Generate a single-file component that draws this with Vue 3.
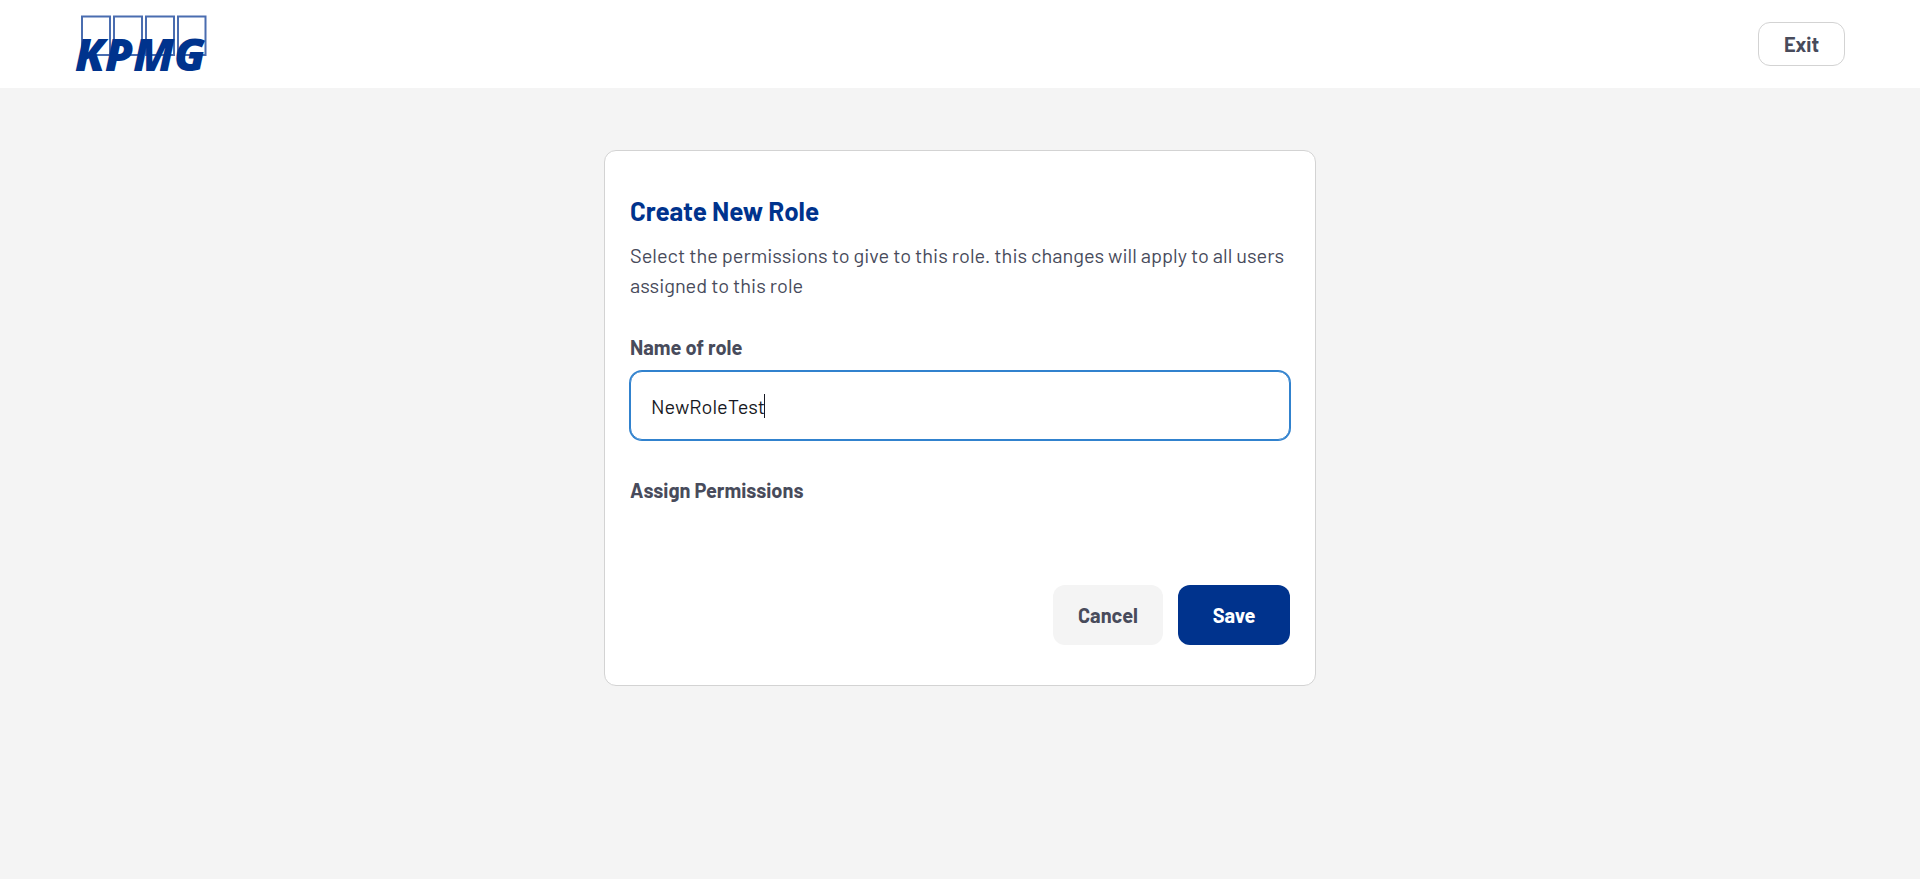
<script setup>
import { ref, onMounted } from 'vue'

const roleName = ref('NewRoleTest')
const nameInput = ref(null)

onMounted(() => {
  nameInput.value.focus()
  nameInput.value.setSelectionRange(roleName.value.length, roleName.value.length)
})
</script>

<template>
  <div class="page">
    <header class="topbar">
      <svg class="logo" width="134" height="60" viewBox="0 0 134 60" role="img" aria-label="KPMG">
        <g class="logo-boxes">
          <path d="M7 2.500H35V41H7ZM39 2.500H67V41H39ZM71 2.500H99V41H71ZM103 2.500H130.500V41H103Z" />
        </g>
        <text class="logo-text" x="0" y="57">KPMG</text>
      </svg>
      <button class="btn btn-exit" type="button">Exit</button>
    </header>

    <main class="content">
      <form class="card" @submit.prevent>
        <h1 class="title">Create New Role</h1>
        <p class="description">
          Select the permissions to give to this role. this changes will apply to all users assigned to this role
        </p>
        <label class="label" for="role-name">Name of role</label>
        <div class="field-wrap">
          <input id="role-name" ref="nameInput" v-model="roleName" class="field" type="text" autocomplete="off" spellcheck="false" />
          <span class="caret" aria-hidden="true"></span>
        </div>
        <h2 class="label">Assign Permissions</h2>
        <div class="actions">
          <button class="btn btn-cancel" type="button">Cancel</button>
          <button class="btn btn-save" type="submit">Save</button>
        </div>
      </form>
    </main>
  </div>
</template>

<style>
body {
  margin: 0;
  background: #f4f4f4;
}
</style>

<style scoped>
.page {
  min-height: 100vh;
  background: #f4f4f4;
  color: #484b5b;
  font-family: Barlow, Roboto, "Liberation Sans", sans-serif;
  font-size: 20px;
  line-height: 30px;
}

.page * {
  box-sizing: border-box;
}

.topbar {
  display: flex;
  align-items: center;
  justify-content: space-between;
  height: 88px;
  padding: 0 75px;
  background: #fff;
}

.logo {
  display: block;
  overflow: visible;
}

.logo-boxes {
  fill: #fff;
  stroke: #4a6db0;
  stroke-width: 2;
}

.logo-text {
  fill: #00338d;
  font-family: "Open Sans", "Noto Sans", sans-serif;
  font-size: 45px;
  font-style: italic;
  font-weight: 800;
}

.btn {
  border: 0;
  border-radius: 12px;
  color: #484b5b;
  font: inherit;
  font-weight: 700;
  cursor: pointer;
}

.btn-exit {
  width: 87px;
  height: 44px;
  border: 1px solid #d3d3d3;
  background: #fff;
}

.content {
  display: flex;
  justify-content: center;
  padding: 62px 24px;
}

.card {
  width: 100%;
  max-width: 712px;
  padding: 44px 25px 40px;
  border: 1px solid #d3d3d3;
  border-radius: 12px;
  background: #fff;
}

.title {
  margin: 0 0 13px;
  color: #00338d;
  font-size: 26px;
  font-weight: 700;
  line-height: 32px;
}

.description {
  margin: 0 0 32px;
  font-weight: 400;
}

.label {
  display: block;
  margin: 0;
  font-size: 20px;
  font-weight: 700;
}

.field-wrap {
  position: relative;
  margin: 9px 0 35px;
}

.field {
  display: block;
  width: 100%;
  height: 69px;
  padding: 0 20px;
  border: 1px solid #3182ce;
  border-radius: 12px;
  outline: 0;
  box-shadow: 0 0 0 1px #3182ce;
  background: #fff;
  color: #171923;
  caret-color: transparent;
  font: inherit;
  font-weight: 400;
}

.caret {
  position: absolute;
  top: 23px;
  left: 134px;
  width: 1px;
  height: 24px;
  background: #171923;
}

.actions {
  display: flex;
  justify-content: flex-end;
  gap: 15px;
  margin-top: 80px;
}

.btn-cancel,
.btn-save {
  height: 60px;
}

.btn-cancel {
  width: 110px;
  background: #f4f4f4;
}

.btn-save {
  width: 112px;
  background: #00338d;
  color: #fff;
}
</style>
